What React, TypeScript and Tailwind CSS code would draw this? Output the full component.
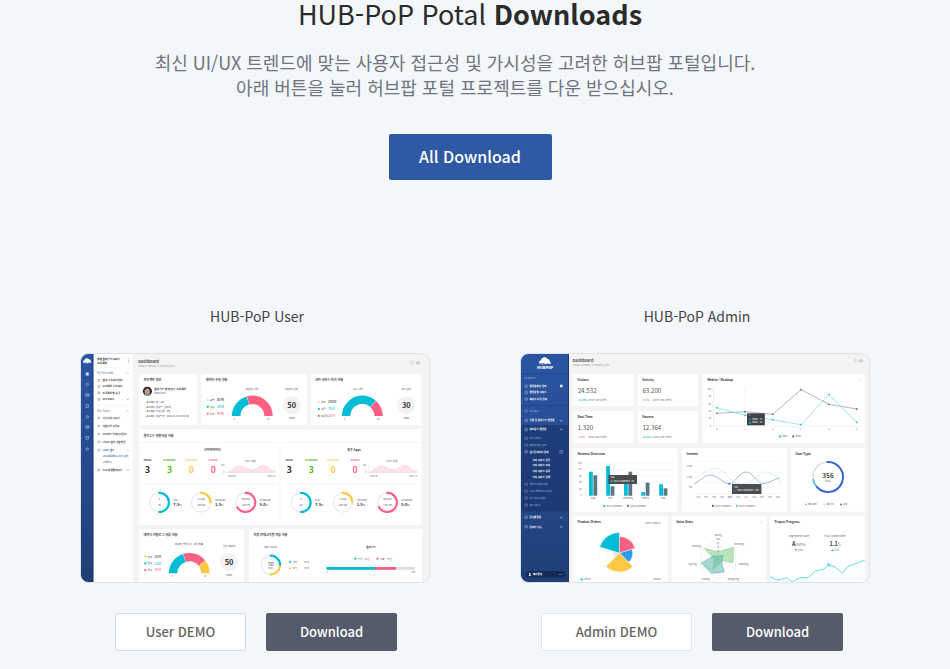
import type { ReactNode } from 'react';

type Point = [number, number];

const TEAL = '#00bcd4';
const PINK = '#ff5f83';
const YELLOW = '#fdc945';
const GREEN = '#45b80b';
const SLATE = '#5b7683';
const CYAN = '#7fdde9';

/* ---------- small drawing helpers for the dashboard previews ---------- */

type LabelProps = {
  x: number;
  y: number;
  size?: number;
  fill?: string;
  weight?: number;
  anchor?: 'start' | 'middle' | 'end';
  children: ReactNode;
};

function Label({ x, y, size = 3, fill = '#666', weight = 400, anchor = 'start', children }: LabelProps) {
  return (
    <text x={x} y={y + size * 0.36} fontSize={size} fill={fill} fontWeight={weight} textAnchor={anchor}>
      {children}
    </text>
  );
}

function Card({ x, y, w, h, title }: { x: number; y: number; w: number; h: number; title?: string }) {
  return (
    <g>
      <rect x={x} y={y} width={w} height={h} fill="#fff" />
      {title && (
        <Label x={x + 4.5} y={y + 6} size={3.1} weight={700} fill="#333">
          {title}
        </Label>
      )}
    </g>
  );
}

function polar(cx: number, cy: number, r: number, deg: number): Point {
  const a = (deg * Math.PI) / 180;
  return [cx + r * Math.cos(a), cy - r * Math.sin(a)];
}

/* Arc drawn clockwise from one angle down to another (degrees, 90 is up). */
function Arc(props: { cx: number; cy: number; r: number; from: number; to: number; width: number; color: string; round?: boolean }) {
  const { cx, cy, r, from, to, width, color, round } = props;
  const [x1, y1] = polar(cx, cy, r, from);
  const [x2, y2] = polar(cx, cy, r, to);
  return (
    <path
      d={`M${x1} ${y1}A${r} ${r} 0 ${from - to > 180 ? 1 : 0} 1 ${x2} ${y2}`}
      fill="none"
      stroke={color}
      strokeWidth={width}
      strokeLinecap={round ? 'round' : 'butt'}
    />
  );
}

function Slice(props: { cx: number; cy: number; r: number; from: number; to: number; color: string }) {
  const { cx, cy, r, from, to, color } = props;
  const [x1, y1] = polar(cx, cy, r, from);
  const [x2, y2] = polar(cx, cy, r, to);
  return <path d={`M${cx} ${cy}L${x1} ${y1}A${r} ${r} 0 0 1 ${x2} ${y2}Z`} fill={color} stroke="#fff" strokeWidth={0.4} />;
}

function HalfDonut({ cx, cy, parts }: { cx: number; cy: number; parts: [number, number, string][] }) {
  return (
    <g>
      {parts.map(([from, to, color]) => (
        <Arc key={from} cx={cx} cy={cy} r={16.2} from={from} to={to} width={8.4} color={color} />
      ))}
      <Label x={cx - 18} y={cy + 3} size={2.2} anchor="middle">0</Label>
      <Label x={cx + 16} y={cy + 3} size={2.2} anchor="middle">50</Label>
    </g>
  );
}

function TotalBadge({ cx, cy, value, title }: { cx: number; cy: number; value: number; title: string }) {
  return (
    <g>
      <Label x={cx} y={cy - 16.3} size={2.6} anchor="middle" fill="#555">{title}</Label>
      <circle cx={cx} cy={cy} r={9} fill="#f2f2f2" />
      <Label x={cx} y={cy} size={7.4} weight={700} fill="#333" anchor="middle">{value}</Label>
      <Label x={cx} y={cy + 13} size={2.7} anchor="middle">Total</Label>
    </g>
  );
}

function Legend({ x, y, rows }: { x: number; y: number; rows: [string, string, string][] }) {
  return (
    <g>
      {rows.map(([color, name, value], i) => (
        <g key={i}>
          <circle cx={x + 0.8} cy={y + i * 6.8} r={1.1} fill={color} />
          <Label x={x + 3} y={y + i * 6.8} size={2.5} fill="#444">{name}</Label>
          <Label x={x + 10} y={y + i * 6.8} size={3.2} weight={500} fill={color === '#ddd' || color === YELLOW ? '#333' : color}>{value}</Label>
        </g>
      ))}
    </g>
  );
}

function CloudMark({ x, y, scale }: { x: number; y: number; scale: number }) {
  return (
    <g transform={`translate(${x} ${y}) scale(${scale})`} fill="#fff">
      <path d="M-5 2.7C-6.4 1.5-5.4-.7-3.7-.8-3.3-3.6.8-4.5 2.1-2 3.6-2.2 4.8-.8 4.5.5 5.7.9 5.8 2.4 4.9 3 3.4 2.1 2 2.2.7 3.1-.9 1.7-3.4 1.4-5 2.7Z" />
      <path d="M-4.7 3.1C-3 2-1.4 2.2-.1 3.1Z" />
    </g>
  );
}

function Frame({ label, id, children }: { label: string; id: string; children: ReactNode }) {
  return (
    <svg
      viewBox="0 0 350 230"
      role="img"
      aria-label={label}
      className="block h-auto w-full [font-family:'Noto_Sans_CJK_KR','Noto_Sans',sans-serif]"
    >
      <defs>
        <clipPath id={`${id}-clip`}>
          <rect x="0.5" y="0.5" width="349" height="229" rx="8" />
        </clipPath>
        <linearGradient id={`${id}-nav`} x1="0" y1="0" x2="0" y2="1">
          <stop offset="0" stopColor="#2b55a3" />
          <stop offset="1" stopColor="#1f3e76" />
        </linearGradient>
      </defs>
      <g clipPath={`url(#${id}-clip)`}>
        <rect width="350" height="230" fill="#f4f4f4" />
        {children}
      </g>
      <rect x="0.5" y="0.5" width="349" height="229" rx="8" fill="none" stroke="#dfe3e8" />
    </svg>
  );
}

function HeaderIcons({ x, y }: { x: number; y: number }) {
  return (
    <g fill="none" stroke="#aaa" strokeWidth={0.5}>
      <rect x={x} y={y - 1.4} width={2.2} height={2.8} rx={0.3} strokeDasharray="0.7 0.4" />
      <path d={`M${x + 5.4} ${y + 0.9}a1.2 1.2 0 0 1 1-1.8h2M${x + 8.6} ${y - 0.7}a1.2 1.2 0 0 1-1 1.8h-2`} strokeWidth={0.8} />
    </g>
  );
}

/* ---------- user portal preview ---------- */

const USER_MENU: [number, string, string][] = [
  [27.3, '블록 스토리지관리', '#444'],
  [33.5, '오브젝트 스토리지', '#444'],
  [40, '프로젝트별 요금', '#444'],
  [46.3, 'API Docs', '#333'],
  [65, '가상서버 서비스', '#555'],
  [73, '개발자도구관리', '#555'],
  [81, 'Docker 컨테이너관리', '#555'],
  [89, 'Linux 블록 개발환경', '#555'],
  [97, 'JAVA 빌드', '#2f59a8'],
  [117, '소프 마켓플레이스', '#444'],
];

const SERVER_STATES: [string, number, string][] = [
  ['TOTAL', 3, '#222'],
  ['RUNNING', 3, GREEN],
  ['STOPPED', 0, YELLOW],
  ['ERROR', 0, PINK],
];

function ResourceColumn({ x, title }: { x: number; title: string }) {
  const gauges: [number, string, string, string, string, string, number][] = [
    [14, TEAL, '3', '40', 'CPU', '7.5', -90],
    [55.7, YELLOW, '1.5 GB', '100 GB', 'MEMORY', '1.5', 0],
    [100.3, PINK, '500 GB', '1.00 TB', 'STORAGE', '5.0', -150],
  ];
  return (
    <g>
      <Label x={x + 67} y={96.5} size={3} weight={700} fill="#444" anchor="middle">{title}</Label>
      {SERVER_STATES.map(([name, value, color], i) => (
        <g key={name}>
          <Label x={x + 2.3 + i * 21.9} y={107.5} size={2.6} weight={700} fill={color} anchor="middle">{name}</Label>
          <Label x={x + 2.3 + i * 21.9} y={117} size={8.6} weight={700} fill={color} anchor="middle">{value}</Label>
        </g>
      ))}
      <Label x={x + 105} y={107.8} size={2.6} anchor="middle">CPU 상태</Label>
      <path
        d={`M${x + 82} 119.3C${x + 88} 118 ${x + 89} 113 ${x + 94} 113S${x + 103} 117 ${x + 107} 117S${x + 113} 112.5 ${x + 118} 112.5S${x + 124} 118 ${x + 130} 118.5V119.3Z`}
        fill="#fde3ea"
        stroke="#f6bccb"
        strokeWidth={0.4}
      />
      <path d={`M${x + 81.5} 112V119.5H${x + 130}`} fill="none" stroke="#ddd" strokeWidth={0.4} />
      <Label x={x + 79} y={112} size={2} anchor="end">100</Label>
      <Label x={x + 79} y={119} size={2} anchor="end">0</Label>
      <Label x={x + 83} y={123} size={2.2}>2018.01</Label>
      <Label x={x + 130} y={123} size={2.2} anchor="end">2018.12</Label>
      <path d={`M${x - 1} 131.3h132`} stroke="#eee" strokeWidth={0.6} />
      {gauges.map(([dx, color, used, total, name, percent, end]) => (
        <g key={name}>
          <circle cx={x + dx} cy={149.4} r={9.6} fill="none" stroke="#eee" strokeWidth={1.6} />
          <Arc cx={x + dx} cy={149.4} r={9.6} from={90} to={end} width={2.2} color={color} round />
          <Label x={x + dx} y={146.5} size={2.5} fill="#555" anchor="middle">{used}</Label>
          <Label x={x + dx} y={152.5} size={2.5} fill="#555" anchor="middle">{total}</Label>
          <Label x={x + dx + 14} y={146.8} size={2.5} fill="#555">{name}</Label>
          <Label x={x + dx + 14} y={152} size={4} weight={700} fill="#333">
            {percent}
            <tspan fontSize={2.6} fontWeight={400}>%</tspan>
          </Label>
        </g>
      ))}
    </g>
  );
}

function UserPreview() {
  return (
    <Frame label="HUB-PoP user dashboard preview" id="user">
      <rect width="13.6" height="230" fill="url(#user-nav)" />
      <rect x="12.6" width="1" height="230" fill="#0d2c6c" />
      <rect x="13.6" width="39.4" height="230" fill="#fff" />
      <CloudMark x={7.2} y={7.8} scale={0.75} />
      {[21, 31.3, 42, 53, 63.8, 74, 84.7, 96].map((y, i) => (
        <g key={y} fill="none" stroke="#9db4dc" strokeWidth={0.7}>
          {i % 3 === 0 && <rect x={6} y={y - 1.3} width={2.6} height={2.6} fill={i === 0 ? '#dbe5f8' : 'none'} />}
          {i % 3 === 1 && <circle cx={7.3} cy={y} r={1.2} />}
          {i % 3 === 2 && <path d={`M5.8 ${y - 1.2}h3v2.4h-3zM5.8 ${y}h3`} />}
        </g>
      ))}

      <Label x={17} y={6.2} size={2.8} weight={700} fill="#333">행정클라우드서비스</Label>
      <Label x={17} y={10.2} size={2.8} weight={700} fill="#333">프로젝트</Label>
      <path d="M48.5 5.5v5" stroke="#888" strokeWidth={0.7} strokeDasharray="0.8 1" />
      <path d="M13.6 15h39.4M13.6 52.5h39.4" stroke="#eee" strokeWidth={0.5} />
      <Label x={17} y={20} size={2.8} fill="#5476ac">My Service</Label>
      <circle cx={32} cy={20} r={1.1} fill="none" stroke="#5476ac" strokeWidth={0.4} />
      <Label x={17} y={58} size={2.8} fill="#5476ac">Dev Tools</Label>
      {USER_MENU.map(([y, name, color]) => (
        <g key={name}>
          <circle cx={18.8} cy={y} r={1.1} fill="none" stroke={color} strokeOpacity={0.75} strokeWidth={0.5} />
          <Label x={22.6} y={y} size={2.6} weight={700} fill={color}>{name}</Label>
        </g>
      ))}
      <Label x={22.6} y={103} size={2.5} weight={500} fill="#2f59a8">JAVA바로빌드 소스 관리</Label>
      <Label x={22.6} y={109.3} size={2.5} fill="#444">실행하기</Label>
      {[20, 58, 97].map((y) => (
        <path key={y} d={`M46.6 ${y + 0.5}l1-1 1 1`} fill="none" stroke="#888" strokeWidth={0.5} />
      ))}
      {[46.3, 117].map((y) => (
        <path key={y} d={`M46.8 ${y - 0.5}l1 1 1-1`} fill="none" stroke="#666" strokeWidth={0.6} />
      ))}

      <Label x={58.3} y={8.4} size={3.9} weight={700} fill="#555">Dashboard</Label>
      <Label x={58.3} y={13} size={2.2} fill="#999">Today is Tuesday, 13 February 2018</Label>
      <HeaderIcons x={331} y={9.8} />

      <Card x={59} y={21} w={58.5} h={51} title="프로젝트 정보" />
      <circle cx={67.4} cy={38.3} r={4.5} fill="#252329" />
      <path d="M64.7 37.2q2.7-4 5.1 0v3.3q-2.6 2.6-5.1 0Z" fill="#c49a86" />
      <path d="M64 42q3-3.8 7 0l-3.4 1Z" fill="#8195a8" />
      <Label x={74} y={36.4} size={2.8} weight={700} fill="#444">클라우드 한라연구 프로젝트</Label>
      <Label x={74} y={40.6} size={2}>admin@hub</Label>
      {['프로젝트 ID : 123', '프로젝트 생성일 : 관리자', '프로젝트 참여인원 : 4명', '프로젝트 생성일자 : 2018-01-23 16:53:30'].map((line, i) => (
        <Label key={line} x={65} y={49.5 + i * 4.5} size={2.4} fill="#444">· {line}</Label>
      ))}

      <Card x={121.3} y={21} w={105.4} h={51} title="데이터 수집 현황" />
      <Legend x={127} y={47} rows={[['#ddd', '쇼핑', '80개'], [TEAL, '생성', '30개'], [PINK, '종료', '40개']]} />
      <Label x={172} y={36} size={2.6} fill="#555" anchor="middle">데이터 사용</Label>
      <HalfDonut cx={172.3} cy={63} parts={[[180, 106, TEAL], [105, 0, PINK]]} />
      <TotalBadge cx={211.7} cy={52.3} value={50} title="데이터 관리" />

      <Card x={231} y={21} w={110.5} h={51} title="API 서비스 처리 현황" />
      <Legend x={238} y={49.3} rows={[['#ddd', '전체', '100건'], [TEAL, '성공', '75건'], [PINK, '미응답', '25건']]} />
      <Label x={278} y={36} size={2.6} fill="#555" anchor="middle">API 실행</Label>
      <HalfDonut cx={282.3} cy={63} parts={[[180, 48, TEAL], [47, 0, PINK]]} />
      <TotalBadge cx={326.3} cy={52.3} value={30} title="API 관리" />

      <Card x={59} y={76.5} w={282.5} h={95.5} title="클라우드 자원사용 현황" />
      <path d="M59 89.5h282.5M200 89.5v82.5" stroke="#f0f0f0" strokeWidth={0.6} />
      <ResourceColumn x={65.3} title="하이퍼바이저" />
      <ResourceColumn x={207} title="표준 Apps" />

      <Card x={59} y={176} w={105} h={54} title="데이터 카탈로그 사용 현황" />
      <Label x={109} y={191.3} size={2.6} fill="#555" anchor="middle">데이터 카탈로그 사용 현황</Label>
      <HalfDonut cx={109.3} cy={220.3} parts={[[180, 108, TEAL], [107, 39, PINK], [38, 0, YELLOW]]} />
      <Legend x={64.6} y={203.6} rows={[[YELLOW, '전체', '20건'], [TEAL, '완료', '35건'], [PINK, '종료', '45건']]} />
      <TotalBadge cx={149} cy={209} value={50} title="월간 데이터" />

      <Card x={169} y={176} w={173} h={54} title="작업 카테고리별 이용 현황" />
      <Label x={190.7} y={194.2} size={2.6} fill="#555" anchor="middle">애드 서비스</Label>
      <circle cx={190.7} cy={212} r={9.4} fill="none" stroke="#eee" strokeWidth={1.7} />
      <Arc cx={190.7} cy={212} r={9.4} from={90} to={-5} width={2.2} color={TEAL} round />
      <Arc cx={190.7} cy={212} r={9.4} from={-10} to={-90} width={2.2} color={YELLOW} round />
      <Label x={190.7} y={211} size={5} fill="#444" anchor="middle">50</Label>
      <Label x={190.7} y={215.3} size={2.2} anchor="middle">Total</Label>
      {[[209, TEAL, '진행'], [215.3, YELLOW, '대기']].map(([y, color, name]) => (
        <g key={name}>
          <circle cx={210} cy={Number(y)} r={1.1} fill={String(color)} />
          <Label x={212.5} y={Number(y)} size={2.4}>{name}</Label>
          <Label x={224} y={Number(y)} size={2.4}>25개</Label>
        </g>
      ))}
      <Label x={291} y={194.4} size={2.7} weight={700} fill="#444" anchor="middle">클라우드</Label>
      <circle cx={275.4} cy={205.7} r={1.1} fill={TEAL} />
      <Label x={278} y={205.7} size={2.4}>가동</Label>
      <Label x={284.5} y={205.7} size={2.4}>33건</Label>
      <circle cx={297.5} cy={205.7} r={1.1} fill={PINK} />
      <Label x={300} y={205.7} size={2.4} fill="#444">실패</Label>
      <Label x={307} y={205.7} size={2.4}>33건</Label>
      <rect x={246.5} y={214} width={88.5} height={2.8} fill="#dcdce4" />
      <rect x={246.5} y={214} width={48.5} height={2.8} fill={TEAL} />
      <rect x={295} y={214} width={21} height={2.8} fill={PINK} />
      <Label x={246.5} y={219.5} size={2.2}>0</Label>
      <Label x={335} y={219.5} size={2.2} anchor="end">100</Label>
    </Frame>
  );
}

/* ---------- admin portal preview ---------- */

const ADMIN_MENU: [number, string, boolean, number][] = [
  [33.3, '플랫폼메인 관리', true, 9.5],
  [39.5, '플랫폼별 서비스', true, 9.5],
  [46, '페이지 요청 관리', true, 9.5],
  [58, '대시보드', false, 9.5],
  [67.5, '공통 및 클라우드 플랫폼', true, 9.5],
  [76.5, '데브옵스 플랫폼', true, 9.5],
  [85.3, 'GIS 서비스', false, 9.5],
  [92, '메타데이터 관리', false, 9.5],
  [98.7, '실시간데이터 관리', true, 9.5],
  [106.7, '가이 서비스 분류', true, 12.5],
  [112.5, '가이 서비스 조회', true, 12.5],
  [118, '가이 서비스 등록', true, 12.5],
  [123.6, '가이 서비스 검색', true, 12.5],
  [131.3, '개발자서비스관리', false, 9.5],
  [138.3, 'JAVA 클라우드서비스', false, 9.5],
  [145, 'API 게이트웨이', false, 9.5],
  [152, 'DB 서비스', false, 9.5],
  [164.3, '문서플랫폼', true, 9.5],
  [173.7, '관리자 기능', true, 9.5],
];

const STATS: [number, number, string, string, string, string][] = [
  [53, 21, 'Visitors', '24.532', '+1.14%', TEAL],
  [117.7, 21, 'Activity', '63.200', '-1.2%', PINK],
  [53, 58, 'Real Time', '1.320', '-1.8%', PINK],
  [117.7, 58, 'Bounce', '12.364', '+0.27%', TEAL],
];

const BARS: [number, number, number, string][] = [
  [69, 118.7, 122.3, 'Italy'],
  [86.2, 113, 133.3, 'USA'],
  [104, 130, 118.7, 'Germany'],
  [121.3, 139, 129.7, 'France'],
  [139.2, 131.3, 135.3, 'Asia'],
];

const DESKTOP: Point[] = [[196.7, 60.3], [225, 58.7], [252.7, 61.3], [281, 36.7], [309, 51.3], [336.7, 56]];
const MOBILE: Point[] = [[196.7, 54.7], [225, 62.3], [252.7, 66.7], [281, 71.7], [309, 41.3], [336.7, 69.3]];

function Series({ points, color, dot }: { points: Point[]; color: string; dot: string }) {
  return (
    <g>
      <polyline points={points.join(' ')} fill="none" stroke={color} strokeWidth={0.8} />
      {points.map(([x, y]) => (
        <circle key={x} cx={x} cy={y} r={0.9} fill={dot} />
      ))}
    </g>
  );
}

type KeyProps = { x: number; y: number; color: string; children: string; round?: boolean; fill?: string };

function Key({ x, y, color, children, round, fill = '#666' }: KeyProps) {
  return (
    <g>
      <rect x={x} y={y - 0.9} width={1.9} height={1.9} rx={round ? 1 : 0} fill={color} />
      <Label x={x + 3} y={y} size={2.2} fill={fill}>{children}</Label>
    </g>
  );
}

function AdminPreview() {
  const months = ['JAN', 'FEB', 'MAR', 'APR', 'MAY', 'JUN', 'JUL', 'AUG', 'SEP', 'NOV', 'DEC'];
  const ring = (r: number) => Array.from({ length: 6 }, (_, i) => polar(198.3, 206, r, 90 - i * 60)).join(' ');
  return (
    <Frame label="HUB-PoP admin dashboard preview" id="admin">
      <rect width="49" height="230" fill="url(#admin-nav)" />
      <rect y="72" width="49" height="86.5" fill="#142b62" opacity={0.5} />
      <rect x="48" width="1" height="230" fill="#1b3770" />
      <path d="M0 20.5h48M0 52.3h48M0 168.5h48" stroke="#1d3f83" strokeWidth={0.5} />
      <CloudMark x={25} y={8} scale={1.05} />
      <Label x={25} y={14.6} size={3.8} weight={900} fill="#fff" anchor="middle">HUBPoP</Label>
      <Label x={4.3} y={25.6} size={2.2} fill="#a9bbdc">My Service</Label>
      {ADMIN_MENU.map(([y, name, strong, x]) => (
        <g key={y}>
          {x < 12 && <rect x={5} y={y - 1.2} width={2.4} height={2.4} rx={0.8} fill="none" stroke={strong ? '#b4c5e6' : '#7f97c6'} strokeWidth={0.6} />}
          <Label x={x} y={y} size={2.5} weight={strong ? 700 : 400} fill={strong ? '#fff' : '#9fb2d8'}>{name}</Label>
        </g>
      ))}
      <rect x={40} y={31.7} width={2.6} height={2.6} fill="#dbe5f8" />
      <rect x={40} y={97.6} width={2.4} height={2.4} fill="none" stroke="#9fb2d8" strokeWidth={0.5} />
      <path d="M39.7 67l1.4 1.2 1.4-1.2M39.7 77.1l1.4-1.2 1.4 1.2M39.7 164l1.4 1.2 1.4-1.2M39.7 173.2l1.4 1.2 1.4-1.2" fill="none" stroke="#dbe5f8" strokeWidth={0.6} />
      <rect x={6} y={218.2} width={39.5} height={6.4} rx={3.2} fill="#122855" />
      <circle cx={9.8} cy={220.5} r={0.8} fill="#fff" />
      <rect x={8.9} y={221.5} width={1.9} height={1.6} fill="#fff" />
      <Label x={12.7} y={221.4} size={2.6} weight={700} fill="#fff">메이팝님</Label>
      <path d="M39 221.4h4" stroke="#9fb2d8" strokeWidth={0.8} strokeDasharray="0.8 0.6" />

      <Label x={52.6} y={7.6} size={3.9} weight={700} fill="#555">Dashboard</Label>
      <Label x={52.6} y={12.5} size={2.2} fill="#999">Today is Tuesday, 13 February 2018</Label>
      <HeaderIcons x={334} y={7.8} />

      {STATS.map(([x, y, title, value, change, color]) => (
        <g key={title}>
          <Card x={x} y={y} w={60.4} h={32} title={title} />
          <Label x={x + 4.7} y={y + 16.8} size={6.2} fill="#555">{value}</Label>
          <Label x={x + 4.7} y={y + 26} size={2.5} weight={700} fill={color}>{change}</Label>
          <Label x={x + 15} y={y + 26} size={2.6} fill="#777">Since last week</Label>
        </g>
      ))}

      <Card x={182.7} y={21} w={162} h={69} title="Mobile / Desktop" />
      <Label x={339} y={27} size={3} fill="#aaa" anchor="middle">⋮</Label>
      {[100, 80, 60, 40, 20, 0].map((v, i) => (
        <Label key={v} x={191} y={36 + i * 7.4} size={2.2} anchor="end">{v}</Label>
      ))}
      <path d="M193.5 34v39.3H341" fill="none" stroke="#ddd" strokeWidth={0.5} />
      <path d="M225 34v39" stroke="#e6e6e6" strokeWidth={0.5} />
      {MOBILE.map(([x], i) => (
        <Label key={x} x={x} y={76.7} size={2.2} anchor="middle">{i}</Label>
      ))}
      <Series points={DESKTOP} color="#9aa6b0" dot="#5f7280" />
      <Series points={MOBILE} color={CYAN} dot="#26c6da" />
      <rect x={227} y={60.3} width={17.8} height={12} fill="#3e4145" />
      <Label x={229} y={62.6} size={2} fill="#fff">1</Label>
      <Key x={229.2} y={66.2} color={SLATE} fill="#fff">data2 : 37</Key>
      <Key x={229.2} y={69.7} color={TEAL} fill="#fff">data1 : 28</Key>
      <Key x={258.8} y={83.4} color={TEAL}>data1</Key>
      <Key x={272.2} y={83.4} color="#5b6a76">data2</Key>

      <Card x={53} y={95} w={104.8} h={63.7} title="Balance Overview" />
      {[110, 116.6, 123.2, 129.7, 136.2, 142.7].map((y, i) => (
        <g key={y}>
          <path d={`M66 ${y}h89`} stroke="#eee" strokeWidth={0.5} />
          <Label x={61.5} y={y} size={2.2} anchor="end">{100 - i * 20}</Label>
        </g>
      ))}
      {BARS.map(([x, a, b, name]) => (
        <g key={name}>
          <rect x={x} y={a} width={3.8} height={142.7 - a} fill={TEAL} />
          <rect x={x + 4.4} y={b} width={3.8} height={142.7 - b} fill={SLATE} />
          <Label x={x + 4} y={145.6} size={2.3} anchor="middle">{name}</Label>
        </g>
      ))}
      <rect x={88.4} y={122} width={28.6} height={9} fill="#4a4d50" />
      <Label x={90.5} y={124.6} size={2.2} fill="#fff">USA</Label>
      <Key x={90.6} y={128} color={TEAL} fill="#fff">2019 customers : 92</Key>
      <Key x={83.3} y={152.8} color={TEAL}>2019 customers</Key>
      <Key x={107} y={152.8} color={SLATE}>2020 customers</Key>

      <Card x={162} y={95} w={105} h={63.7} title="Income" />
      {[108.3, 119.3, 129.7, 140.7].map((y, i) => (
        <g key={y}>
          <path d={`M174 ${y}h88`} stroke="#eee" strokeWidth={0.5} />
          {i < 3 && <Label x={172} y={y + 4.6} size={2.1} anchor="end">{['1,500', '1,100', '700'][i]}</Label>}
        </g>
      ))}
      <path d="M174 126C181 123 188 115.3 195 115.3C205 115.3 210 131 221 131C234 131 237 119 247 119C253 119 257 126 261 129" fill="none" stroke="#cdeff7" strokeWidth={0.8} />
      <path d="M174 131C180 128 184 122 190 122C198 122 203 130.8 209.3 130.8C215 130.8 219 119 226 119C233 119 237 130.5 243 130.5C249 130.5 254 126 260 124.8" fill="none" stroke="#8ba6e2" strokeWidth={0.8} />
      <circle cx={209.3} cy={130.8} r={1} fill="#3a66cf" />
      {months.map((m, i) => (
        <Label key={m} x={178 + i * 8} y={144.6} size={2.1} anchor="middle" weight={m === 'MAY' ? 700 : 400} fill={m === 'MAY' ? '#3a66cf' : '#777'}>{m}</Label>
      ))}
      <rect x={212} y={131} width={29.4} height={10} fill="#4a4d50" />
      <Label x={214} y={134} size={2.2} fill="#fff">MAY</Label>
      <Key x={214.2} y={137.7} color="#3a66cf" fill="#fff">2019 customers : 560</Key>
      <Key x={192} y={152.8} color="#3a66cf">2019 customers</Key>
      <Key x={216} y={152.8} color="#5cc9f0">2020 customers</Key>

      <Card x={271} y={95} w={73.7} h={63.7} title="Goal Type" />
      <circle cx={308} cy={124} r={15} fill="none" stroke="#d6e3e8" strokeWidth={1.7} />
      <Arc cx={308} cy={124} r={15} from={95} to={-142} width={2} color="#3a66cf" />
      <Arc cx={308} cy={124} r={15} from={-142} to={-172} width={2} color="#5cc9f0" />
      <Label x={308} y={122.9} size={6.4} weight={700} fill="#444" anchor="middle">356</Label>
      <Label x={308} y={128.2} size={2.2} anchor="middle">TOTAL</Label>
      <Key x={285.2} y={151.4} color="#5cc9f0" round fill="#333">SEA 309</Key>
      <Key x={303.5} y={151.4} color="#ddd" round fill="#333">SEA 74</Key>
      <Key x={320.2} y={151.4} color="#3a66cf" round fill="#333">LOC</Key>

      <Card x={53} y={163} w={94.8} h={67} title="Product Orders" />
      <Label x={141} y={169.6} size={2.5} anchor="end">Last 7 days ▾</Label>
      <circle cx={99.4} cy={200} r={20} fill="none" stroke="#eee" strokeWidth={0.6} />
      <circle cx={99.4} cy={200} r={13} fill="none" stroke="#eee" strokeWidth={0.6} />
      <Slice cx={99.4} cy={200} r={6.7} from={225} to={163} color="#e6e8ec" />
      <Slice cx={99.4} cy={200} r={20.5} from={163} to={90} color={TEAL} />
      <Slice cx={99.4} cy={200} r={16.4} from={90} to={17} color={PINK} />
      <Slice cx={99.4} cy={200} r={13.2} from={17} to={-45} color="#2f9ceb" />
      <Slice cx={99.4} cy={200} r={19} from={-45} to={-135} color={YELLOW} />
      <circle cx={61.6} cy={226.4} r={1.1} fill={TEAL} />
      <Label x={64} y={226.4} size={2.5}>Africa</Label>
      <Label x={141} y={226.4} size={2.5} anchor="end">235KM</Label>

      <Card x={151.7} y={163} w={94.4} h={67} title="Sales Stats" />
      <Label x={241} y={169} size={3} fill="#aaa" anchor="middle">⋮</Label>
      {[20, 14, 8].map((r) => (
        <polygon key={r} points={ring(r)} fill="none" stroke="#e7e7e7" strokeWidth={0.5} />
      ))}
      <path d="M198.3 186v40M181 196l34.6 20M181 216l34.6-20" stroke="#eee" strokeWidth={0.5} />
      {[100, 80, 60, 40, 20].map((v, i) => (
        <Label key={v} x={198} y={186.7 + i * 3.9} size={2} anchor="middle">{v}</Label>
      ))}
      <polygon points="184.3,195.3 198,198.7 213.7,194.3 213,209.7 203,207.5 193,216.5 194,206" fill="#8fd18e" fillOpacity={0.6} stroke="#7ccb80" strokeWidth={0.5} />
      <polygon points="181.3,210 194,202.7 198,204 202.7,202 201.7,210 204.3,219 191.3,220.3" fill="#5fb8ac" fillOpacity={0.55} stroke="#45aea0" strokeWidth={0.5} />
      {([[198, 181.7, 'Eating'], [176.5, 193, 'Running'], [219, 191.5, 'Drinking'], [223.5, 211, 'Sleeping'], [213.3, 226.4, 'Designing'], [185.6, 226.4, 'Coding'], [172.5, 211.5, 'Cycling']] as [number, number, string][]).map(([x, y, name]) => (
        <Label key={name} x={x} y={y} size={2.4} anchor="middle">{name}</Label>
      ))}

      <Card x={250} y={163} w={94.7} h={67} title="Project Progress" />
      <Label x={279} y={183} size={2.6} anchor="middle">Pagespeed score</Label>
      <Label x={279} y={190.8} size={5.6} weight={700} fill="#444" anchor="middle">
        A<tspan fontSize={3.8} fontWeight={400} fill="#777">(84%)</tspan>
      </Label>
      <Label x={279} y={197.4} size={2.5} anchor="middle"><tspan fill={PINK}>▼</tspan> 0.8%</Label>
      <Label x={315} y={183} size={2.6} anchor="middle">Fully loaded time</Label>
      <Label x={315} y={190.8} size={5.6} weight={700} fill="#444" anchor="middle">
        1.1<tspan fontSize={4.4} fontWeight={400} fill="#777">S</tspan>
      </Label>
      <Label x={315} y={197.4} size={2.5} anchor="middle"><tspan fill={TEAL}>▲</tspan> 0.3s</Label>
      <path d="M250 223.7 257.7 227.3 266.7 224.7 272.3 229 279.3 224.7H288.3L295.3 218 304 216 308.7 211.7 315 214 322.3 220.3 328 213.3 344.7 207.3V230H250Z" fill="#fafdfe" />
      <path d="M250 223.7 257.7 227.3 266.7 224.7 272.3 229 279.3 224.7H288.3L295.3 218 304 216 308.7 211.7 315 214 322.3 220.3 328 213.3 344.7 207.3" fill="none" stroke="#6fdbe8" strokeWidth={1} />
      <circle cx={308.7} cy={211.7} r={1.7} fill="#6fdbe8" />
    </Frame>
  );
}

/* ---------- page ---------- */

const ACTION = 'flex h-[38px] items-center justify-center rounded-xs text-[13px] font-medium';

type PortalProps = { title: string; demo: string; demoClass: string; rowClass: string; children: ReactNode };

function Portal({ title, demo, demoClass, rowClass, children }: PortalProps) {
  return (
    <section>
      <h2 className="pl-1 text-center text-sm leading-[22px] text-[#444]">{title}</h2>
      <div className="mt-[26px]">{children}</div>
      <div className={`mt-[30px] flex justify-center gap-5 ${rowClass}`}>
        <a href="#demo" className={`${ACTION} border bg-white text-[#666] ${demoClass}`}>
          {demo}
        </a>
        <button type="button" className={`${ACTION} w-[131px] bg-[#555b6b] text-white`}>
          Download
        </button>
      </div>
    </section>
  );
}

export default function App() {
  return (
    <main
      lang="ko"
      className="min-h-screen bg-[#f3f7fa] px-20 pb-4 [font-family:'Noto_Sans_CJK_KR','Noto_Sans',sans-serif]"
    >
      <header className="flex flex-col items-center pr-2.5 text-center">
        <h1 className="text-[27px] leading-7 font-normal text-[#2b2b2b]">
          HUB-PoP Potal <strong className="font-bold">Downloads</strong>
        </h1>
        <p className="mt-[22px] pr-[30px] text-lg leading-[25px] text-[#6f7480]">
          최신 UI/UX 트렌드에 맞는 사용자 접근성 및 가시성을 고려한 허브팝 포털입니다.
          <br />
          아래 버튼을 눌러 허브팝 포털 프로젝트를 다운 받으십시오.
        </p>
        <button type="button" className="mt-[34px] h-[46px] w-[163px] rounded-xs bg-[#2f59a2] pb-0.5 text-base font-medium text-white">
          All Download
        </button>
      </header>
      <div className="mt-[125px] grid grid-cols-2 gap-[90px]">
        <Portal title="HUB-PoP User" demo="User DEMO" demoClass="w-[131px] border-[#d3dbe6]" rowClass="pl-0.5">
          <UserPreview />
        </Portal>
        <Portal title="HUB-PoP Admin" demo="Admin DEMO" demoClass="w-[151px] border-[#e3e5e8]" rowClass="pr-1.5">
          <AdminPreview />
        </Portal>
      </div>
    </main>
  );
}
